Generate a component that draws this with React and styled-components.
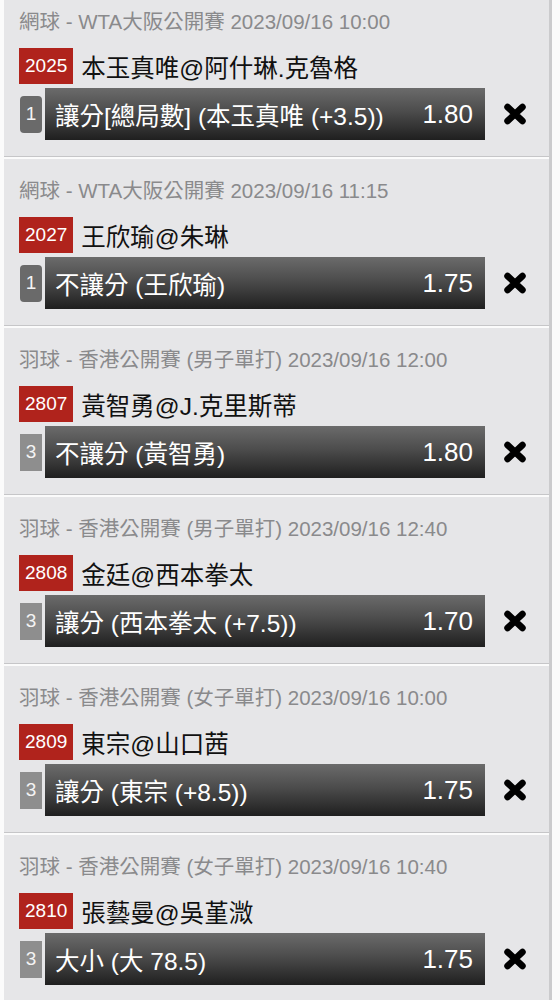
import React from "react";
import styled, { createGlobalStyle } from "styled-components";

const GlobalStyle = createGlobalStyle`
  html, body {
    margin: 0;
    padding: 0;
    background: #fbfbfb;
  }
  body {
    font-family: "Liberation Sans", "Noto Sans CJK TC", sans-serif;
  }
`;

const bets = [
  {
    league: "網球 - WTA大阪公開賽 2023/09/16 10:00",
    no: "2025",
    match: "本玉真唯@阿什琳.克魯格",
    leg: "1",
    pick: "讓分[總局數] (本玉真唯 (+3.5))",
    odds: "1.80",
  },
  {
    league: "網球 - WTA大阪公開賽 2023/09/16 11:15",
    no: "2027",
    match: "王欣瑜@朱琳",
    leg: "1",
    pick: "不讓分 (王欣瑜)",
    odds: "1.75",
  },
  {
    league: "羽球 - 香港公開賽 (男子單打) 2023/09/16 12:00",
    no: "2807",
    match: "黃智勇@J.克里斯蒂",
    leg: "3",
    pick: "不讓分 (黃智勇)",
    odds: "1.80",
  },
  {
    league: "羽球 - 香港公開賽 (男子單打) 2023/09/16 12:40",
    no: "2808",
    match: "金廷@西本拳太",
    leg: "3",
    pick: "讓分 (西本拳太 (+7.5))",
    odds: "1.70",
  },
  {
    league: "羽球 - 香港公開賽 (女子單打) 2023/09/16 10:00",
    no: "2809",
    match: "東宗@山口茜",
    leg: "3",
    pick: "讓分 (東宗 (+8.5))",
    odds: "1.75",
  },
  {
    league: "羽球 - 香港公開賽 (女子單打) 2023/09/16 10:40",
    no: "2810",
    match: "張藝曼@吳堇溦",
    leg: "3",
    pick: "大小 (大 78.5)",
    odds: "1.75",
  },
];

// thick rounded "x" like the old font-awesome remove glyph
const RemoveIcon = () => (
  <svg width='24' height='22' viewBox='0 0 24 22'>
    <path
      d='M4.5 4 L19.5 18 M19.5 4 L4.5 18'
      stroke='#000'
      strokeWidth='6.5'
      strokeLinecap='round'
      fill='none'
    />
  </svg>
);

const BetSlip = () => {
  return (
    <List>
      {bets.map((b, index) => (
        <Card key={index}>
          <League>{b.league}</League>
          <MatchRow>
            <MatchNo>{b.no}</MatchNo>
            <MatchName>{b.match}</MatchName>
          </MatchRow>
          <PickRow>
            <Leg $rounded={b.leg === "1"}>{b.leg}</Leg>
            <PickBar>
              <span>{b.pick}</span>
              <Odds>{b.odds}</Odds>
            </PickBar>
            <RemoveBtn type='button'>
              <RemoveIcon />
            </RemoveBtn>
          </PickRow>
        </Card>
      ))}
    </List>
  );
};

const App = () => (
  <>
    <GlobalStyle />
    <BetSlip />
  </>
);

const List = styled.div`
  margin-left: 4px;
  width: 545px;
  border-right: 3px solid #cbcbcd;
  height: 1000px;
  overflow: hidden;
  background: #fbfbfb;
`;

const Card = styled.section`
  background: #e6e6e8;
  padding: 20px 0 16px 15px;
  border-bottom: 1px solid #c6c6c8;
  margin-bottom: 2px;
  &:first-child {
    padding-top: 10px;
  }
`;

const League = styled.div`
  font-size: 20.5px;
  line-height: 24px;
  color: #8a8a8c;
  margin-bottom: 14px;
  white-space: nowrap;
`;

const MatchRow = styled.div`
  display: flex;
  align-items: center;
  height: 36px;
  margin-bottom: 4px;
`;

const MatchNo = styled.span`
  display: inline-block;
  height: 36px;
  line-height: 36px;
  padding: 0 6px;
  background: #b0231c;
  color: #fff;
  font-size: 19px;
  margin-right: 8px;
`;

const MatchName = styled.span`
  font-size: 24.5px;
  color: #111;
  white-space: nowrap;
`;

const PickRow = styled.div`
  display: flex;
  align-items: center;
  height: 52px;
`;

const Leg = styled.div`
  width: 22px;
  height: 37px;
  margin-left: 1px;
  margin-right: 3px;
  display: flex;
  align-items: center;
  justify-content: center;
  font-size: 19px;
  color: #f4f4f4;
  background: ${(p) => (p.$rounded ? "#6a6a6a" : "#8e8e8e")};
  border-radius: ${(p) => (p.$rounded ? "4px" : "0")};
`;

const PickBar = styled.div`
  flex: 0 0 440px;
  height: 52px;
  box-sizing: border-box;
  padding: 0 12px 0 10px;
  display: flex;
  align-items: center;
  justify-content: space-between;
  background: linear-gradient(to bottom, #6b6b6b 0%, #4c4c4c 45%, #1f1f1f 100%);
  color: #fff;
  font-size: 24.5px;
  white-space: nowrap;
`;

const Odds = styled.span`
  font-size: 26px;
`;

const RemoveBtn = styled.button`
  flex: 1;
  display: flex;
  align-items: center;
  justify-content: center;
  padding: 0 4px 0 0;
  background: transparent;
  border: none;
  cursor: pointer;
`;

export default App;
